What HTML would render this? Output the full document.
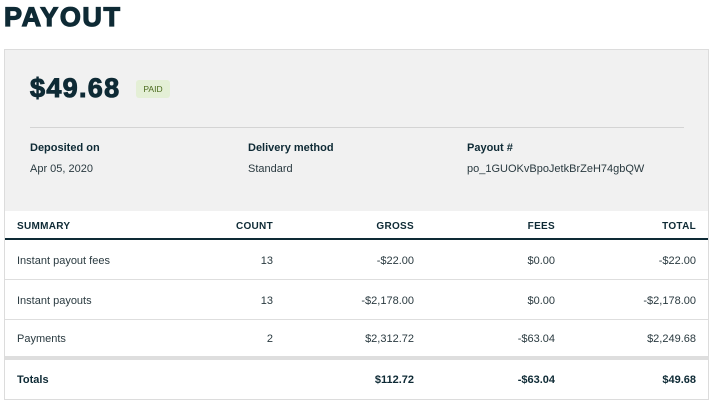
<!DOCTYPE html>
<html><head><style>
*{margin:0;padding:0;box-sizing:border-box}
body{width:716px;height:411px;background:#fff;font-family:"Liberation Sans",sans-serif;color:#0e2a35;position:relative;overflow:hidden}
.abs{position:absolute;white-space:nowrap}
h1{position:absolute;left:4px;top:2px;font-size:27px;font-weight:900;letter-spacing:1.6px;-webkit-text-stroke:1.2px #0e2a35;color:#0e2a35}
.card{position:absolute;left:4px;top:49px;width:705px;height:351px;border:1px solid #dcdcdc;background:#fff}
.gray{position:absolute;left:0;top:0;width:703px;height:161px;background:#f1f1f1}
.amt{left:25px;top:23px;font-size:27px;font-weight:900;letter-spacing:1.3px;-webkit-text-stroke:1px #0e2a35}
.badge{left:131px;top:30px;width:34px;height:18px;background:#e4efd6;border-radius:3px;color:#4a6a1c;font-size:8.5px;line-height:18px;text-align:center}
.div{position:absolute;left:25px;top:77px;width:654px;height:1px;background:#d4d4d4}
.lbl{font-size:11px;font-weight:bold;top:92px}
.val{font-size:11px;top:113px;color:#2a3a40}
table{position:absolute;left:0;top:161px;width:703px;border-collapse:collapse;font-size:11px}
th{font-size:10px;font-weight:bold;height:28px;padding-top:3px;border-bottom:2px solid #0e2a35;letter-spacing:0.3px}
td{height:40px;padding-top:3px;border-bottom:1px solid #dedede;color:#2a3a40}
tr.last td{border-bottom:4px solid #dedede;height:39px}
tr.tot td{font-weight:bold;color:#0e2a35;border-bottom:none;height:38px}
th,td{text-align:right}
.c1{text-align:left;padding-left:12px;width:190px}
.c2{width:78px}.c3{width:141px}.c4{width:141px}.c5{padding-right:12px}
</style></head><body>
<h1>PAYOUT</h1>
<div class="card">
<div class="gray">
<div class="abs amt">$49.68</div>
<div class="abs badge">PAID</div>
<div class="div"></div>
<div class="abs lbl" style="left:25px">Deposited on</div>
<div class="abs val" style="left:25px">Apr 05, 2020</div>
<div class="abs lbl" style="left:243px">Delivery method</div>
<div class="abs val" style="left:243px">Standard</div>
<div class="abs lbl" style="left:462px">Payout #</div>
<div class="abs val" style="left:462px">po_1GUOKvBpoJetkBrZeH74gbQW</div>
</div>
<table>
<tr><th class="c1">SUMMARY</th><th class="c2">COUNT</th><th class="c3">GROSS</th><th class="c4">FEES</th><th class="c5">TOTAL</th></tr>
<tr><td class="c1">Instant payout fees</td><td>13</td><td>-$22.00</td><td>$0.00</td><td class="c5">-$22.00</td></tr>
<tr><td class="c1">Instant payouts</td><td>13</td><td>-$2,178.00</td><td>$0.00</td><td class="c5">-$2,178.00</td></tr>
<tr class="last"><td class="c1">Payments</td><td>2</td><td>$2,312.72</td><td>-$63.04</td><td class="c5">$2,249.68</td></tr>
<tr class="tot"><td class="c1">Totals</td><td></td><td>$112.72</td><td>-$63.04</td><td class="c5">$49.68</td></tr>
</table>
</div>
</body></html>
